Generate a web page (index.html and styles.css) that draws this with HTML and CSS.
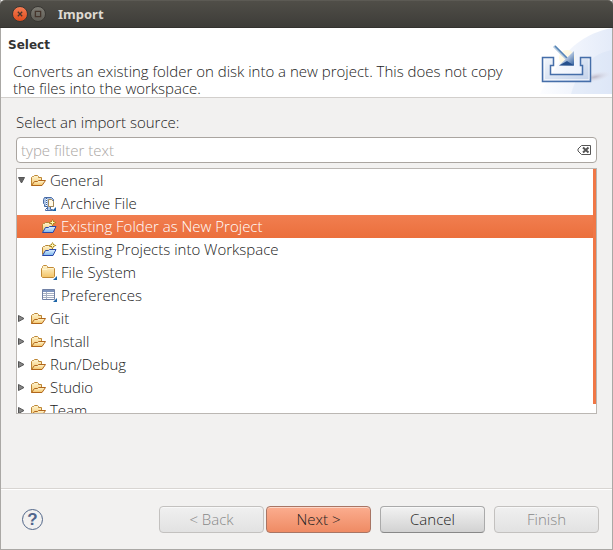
FILE: index.html
```
<!DOCTYPE html>
<html lang="en">
<head>
<meta charset="utf-8">
<title>Import</title>
<link rel="stylesheet" href="styles.css">
</head>
<body>
<svg class="defs" aria-hidden="true">
  <defs>
    <linearGradient id="gold" x1="0" y1="0" x2="0" y2="1"><stop offset="0" stop-color="#fff6d2"/><stop offset="1" stop-color="#f3c366"/></linearGradient>
    <linearGradient id="blue" x1="0" y1="0" x2="0" y2="1"><stop offset="0" stop-color="#e4f1ff"/><stop offset="1" stop-color="#78b5ed"/></linearGradient>
    <linearGradient id="fan" x1="0" y1="0" x2="1" y2="0"><stop offset="0" stop-color="#fcfdff"/><stop offset="1" stop-color="#e4ebf9"/></linearGradient>
    <linearGradient id="tray" x1="0" y1="0" x2="1" y2="1"><stop offset="0" stop-color="#f3f7fc"/><stop offset="1" stop-color="#c1d0e9"/></linearGradient>
    <linearGradient id="head" x1="0" y1="0" x2="1" y2="1"><stop offset=".35" stop-color="#d8e4f2"/><stop offset="1" stop-color="#315e9d"/></linearGradient>
    <radialGradient id="shadow"><stop offset="0" stop-color="#bdb9c8"/><stop offset="1" stop-color="#e4e6f1" stop-opacity="0"/></radialGradient>
    <symbol id="folder" viewBox="0 0 16 16">
      <path d="M1.500 12.500V4.500l1-1h1l1-1h3l1 1v1h3v3" fill="url(#gold)" stroke="#bd8533"/>
      <path d="M1.500 12.500l3-4h3l1-1h7l-3.500 5z" fill="url(#gold)" stroke="#b1661b"/>
    </symbol>
    <symbol id="project" viewBox="0 0 16 16">
      <path d="M1.500 12.500V5.500l1-1h1l1-1h3l1 1h3v4" fill="url(#gold)" stroke="#b58334"/>
      <path d="M1.500 13.500l3-5h3l1-1h6.500l-3 6z" fill="url(#blue)" stroke="#2846a8"/>
      <path d="M11.500 0l1.300 2.200L15.500 3.500l-2.700 1.300-1.300 2.700-1.300-2.700L7.500 3.500l2.700-1.300z" fill="#a98213"/>
      <path d="M11.500 1.500v4M9.500 3.500h4" stroke="#fff7b7"/>
    </symbol>
    <symbol id="archive" viewBox="0 0 16 16">
      <path d="M3.500 1.500h7l2 2v7h-3v3h2v1h-7v-1h2v-3h-3v-2l-1-1v-4z" fill="#a9c2e5" stroke="#496ca6"/>
      <path d="M7.500 3.500h3l2 2v5h-5z" fill="#fff9e7" stroke="#a58a58"/>
      <path d="M5.500 2v12" stroke="#fff"/><path d="M5.500 2v12" stroke="#365a95" stroke-dasharray="1 1"/>
      <path d="M15 11v4h-4z" fill="#1d65a8"/>
    </symbol>
    <symbol id="files" viewBox="0 0 16 16">
      <path d="M.500 11.500V3.500l1-1v-1l1-1h3l1 1v1h6l1 1v8l-1 1h-11z" fill="url(#gold)" stroke="#c28a36"/>
      <path d="M1 4.500h5l1-1h5" fill="none" stroke="#fff4cc"/>
      <path d="M16 11v4h-4z" fill="#1d65a8"/>
    </symbol>
    <symbol id="prefs" viewBox="0 0 16 16">
      <path d="M1.500 1.500h12v10h-12z" fill="#fff" stroke="#7181a5"/>
      <path d="M2 2h11v2H2z" fill="#7d93bd"/>
      <path d="M2 5.500h11M2 7.500h11M2 9.500h11M5.500 4v7" stroke="#a6afc2"/>
      <path d="M16 10v4h-4z" fill="#1d65a8"/>
    </symbol>
    <symbol id="closed" viewBox="0 0 8 8"><path d="M.5 .5l5.500 3-5.500 3z" fill="#888" stroke="#555"/></symbol>
    <symbol id="open" viewBox="0 0 8 8"><path d="M.5 .5h6l-3 5.500z" fill="#666" stroke="#555"/></symbol>
  </defs>
</svg>
<div class="window">
  <header class="titlebar">
    <button class="control close" aria-label="Close"><svg viewBox="0 0 16 16"><path d="M5.500 5.500l5 5M10.500 5.500l-5 5"/></svg></button>
    <button class="control maximize" aria-label="Maximize"><svg viewBox="0 0 16 16"><path d="M5 5h6v6H5z"/></svg></button>
    <span class="title">Import</span>
  </header>
  <section class="banner">
    <div class="intro">
      <h1>Select</h1>
      <p>Converts an existing folder on disk into a new project. This does not copy the files into the workspace.</p>
    </div>
    <svg class="art" viewBox="0 0 75 66" aria-hidden="true">
      <path d="M75 0C49 5 33 19 23 33C15 45 7 57 3 66H75z" fill="url(#fan)"/>
      <path d="M75 22C57 25 42 39 34 66H75z" fill="#d5e1f6" opacity=".4"/>
      <ellipse cx="58" cy="49" rx="17" ry="5" fill="url(#shadow)" transform="rotate(-12 58 49)"/>
      <circle cx="30" cy="30" r="8" fill="#fff9dc" opacity=".8"/>
      <path d="M5.500 29.500h11v8H13.500v9h32v-9H43.500v-8H53.500v24H5.500z" fill="url(#tray)" stroke="#456ea9" stroke-width="1.500"/>
      <path d="M7.500 31v20.500H52V31" fill="none" stroke="#fff" opacity=".6"/>
      <path d="M17 18L31 32" stroke="#b6cbe0" stroke-width="3"/>
      <path d="M18 18L31 31" stroke="#5584b5" stroke-width="1.500"/>
      <path d="M37 23v14.500H22z" fill="url(#head)"/><path d="M30 33l7 4.500H22z" fill="#26508d"/>
    </svg>
  </section>
  <main class="content">
    <label for="filter">Select an import source:</label>
    <div class="search">
      <input id="filter" type="text" placeholder="type filter text">
      <button class="clear" aria-label="Clear filter"><svg viewBox="0 0 15 11"><path d="M4.500 .5h9v9h-9L1 6v-2z" fill="#fff" stroke="#555"/><path d="M6 2.500l5.500 5M11.500 2.500L6 7.500" stroke="#555" stroke-width="2"/></svg></button>
    </div>
    <div class="tree">
      <ul>
        <li><svg class="arrow"><use href="#open"/></svg><svg class="icon"><use href="#folder"/></svg>General</li>
        <li class="child"><svg class="icon"><use href="#archive"/></svg>Archive File</li>
        <li class="child selected"><svg class="icon"><use href="#project"/></svg>Existing Folder as New Project</li>
        <li class="child"><svg class="icon"><use href="#project"/></svg>Existing Projects into Workspace</li>
        <li class="child"><svg class="icon"><use href="#files"/></svg>File System</li>
        <li class="child"><svg class="icon"><use href="#prefs"/></svg>Preferences</li>
        <li><svg class="arrow"><use href="#closed"/></svg><svg class="icon"><use href="#folder"/></svg>Git</li>
        <li><svg class="arrow"><use href="#closed"/></svg><svg class="icon"><use href="#folder"/></svg>Install</li>
        <li><svg class="arrow"><use href="#closed"/></svg><svg class="icon"><use href="#folder"/></svg>Run/Debug</li>
        <li><svg class="arrow"><use href="#closed"/></svg><svg class="icon"><use href="#folder"/></svg>Studio</li>
        <li><svg class="arrow"><use href="#closed"/></svg><svg class="icon"><use href="#folder"/></svg>Team</li>
      </ul>
      <div class="scroll"></div>
    </div>
  </main>
  <footer class="footer">
    <button class="help" aria-label="Help">?</button>
    <div class="steps">
      <button class="btn" disabled>&lt; Back</button>
      <button class="btn next">Next &gt;</button>
    </div>
    <button class="btn">Cancel</button>
    <button class="btn" disabled>Finish</button>
  </footer>
</div>
</body>
</html>
```
FILE: styles.css
```
* { box-sizing: border-box; }
body {
  margin: 0;
  font: 300 15px/17px "Open Sans", "Noto Sans", sans-serif;
  color: #222;
  background: #3c3b37;
}
button, input { font: inherit; color: inherit; }
button { padding: 0; border: 0; background: none; }
.defs { position: absolute; width: 0; height: 0; }
.window {
  display: flex;
  flex-direction: column;
  height: 100vh;
  border: 1px solid #aaa8a5;
  border-top: 0;
  background: #f2f1f0;
}
.titlebar {
  display: flex;
  align-items: center;
  gap: 2px;
  flex: none;
  height: 28px;
  margin: 0 -1px;
  padding: 0 12px;
  border-top: 1px solid #5c5a54;
  border-bottom: 1px solid #33322e;
  border-radius: 5px 5px 0 0;
  background: linear-gradient(#504e48, #3d3c38);
  color: #dfdbd2;
}
.control {
  width: 16px;
  height: 16px;
  border: 1px solid #393733;
  border-radius: 50%;
}
.control svg { display: block; width: 14px; height: 14px; fill: none; stroke: #45352c; stroke-width: 1.5; }
.close { background: linear-gradient(#f47c53, #df4c1d); }
.maximize { background: linear-gradient(#7d7b73, #605e57); }
.title { margin-left: 10px; font: 700 13px/17px "Noto Sans", sans-serif; }
.banner {
  display: flex;
  flex: none;
  height: 70px;
  border-bottom: 1px solid #d2cfcc;
  background: #fff;
}
.intro { flex: 1; padding: 9px 16px 0 7px; }
h1 { margin: 0; font: 700 12px/17px "DejaVu Sans", sans-serif; color: #333; }
p { margin: 9px 0 0 5px; }
.art { flex: none; width: 75px; height: 66px; }
.content {
  display: flex;
  flex-direction: column;
  flex: 1;
  min-height: 0;
  padding: 16px 15px 74px;
}
.search {
  display: flex;
  align-items: center;
  flex: none;
  height: 26px;
  margin: 6px 0 5px;
  padding: 0 4px;
  border: 1px solid #aaa5a0;
  border-radius: 4px;
  background: #fff;
}
.search input { flex: 1; min-width: 0; padding: 0; border: 0; outline: 0; background: none; }
.search input::placeholder { color: #aaa6a3; opacity: 1; }
.clear svg { display: block; width: 15px; height: 11px; }
.tree {
  display: flex;
  position: relative;
  flex: 1;
  min-height: 0;
  overflow: hidden;
  border: 1px solid #bbb7b3;
  background: #fff;
}
ul { flex: 1; margin: 0; padding: 0; list-style: none; }
li { display: flex; align-items: center; height: 23px; padding-left: 1px; white-space: nowrap; }
.child { padding-left: 24px; }
.selected { background: linear-gradient(#f17e50, #eb6f3c); color: #fff; }
.arrow { flex: none; width: 8px; height: 8px; margin-right: 4px; }
.icon { flex: none; width: 16px; height: 16px; margin-right: 4px; }
.scroll { position: absolute; top: 0; right: 0; bottom: 9px; width: 3px; background: #f07746; }
.footer {
  display: flex;
  align-items: center;
  gap: 9px;
  flex: none;
  height: 61px;
  padding: 0 13px 0 21px;
  border-top: 1px solid #d8d5d2;
  box-shadow: inset 0 1px #fff;
}
.help {
  width: 21px;
  height: 21px;
  margin-right: auto;
  border: 1px solid #526789;
  border-radius: 50%;
  color: #50658c;
  font: 700 17px/19px "Liberation Sans", sans-serif;
}
.steps { display: flex; gap: 2px; }
.btn {
  width: 105px;
  height: 27px;
  border: 1px solid #aaa;
  border-bottom-color: #888;
  border-radius: 4px;
  background: linear-gradient(#f2f2f2, #d2d2d2);
  box-shadow: inset 0 1px #ffffff80;
}
.btn:disabled { color: #888; border-color: #c3c1bf; background: linear-gradient(#f0f0f0, #e2e2e2); }
.next { border-color: #a87564; background: linear-gradient(#fbad8f, #ef8b64); }
```
